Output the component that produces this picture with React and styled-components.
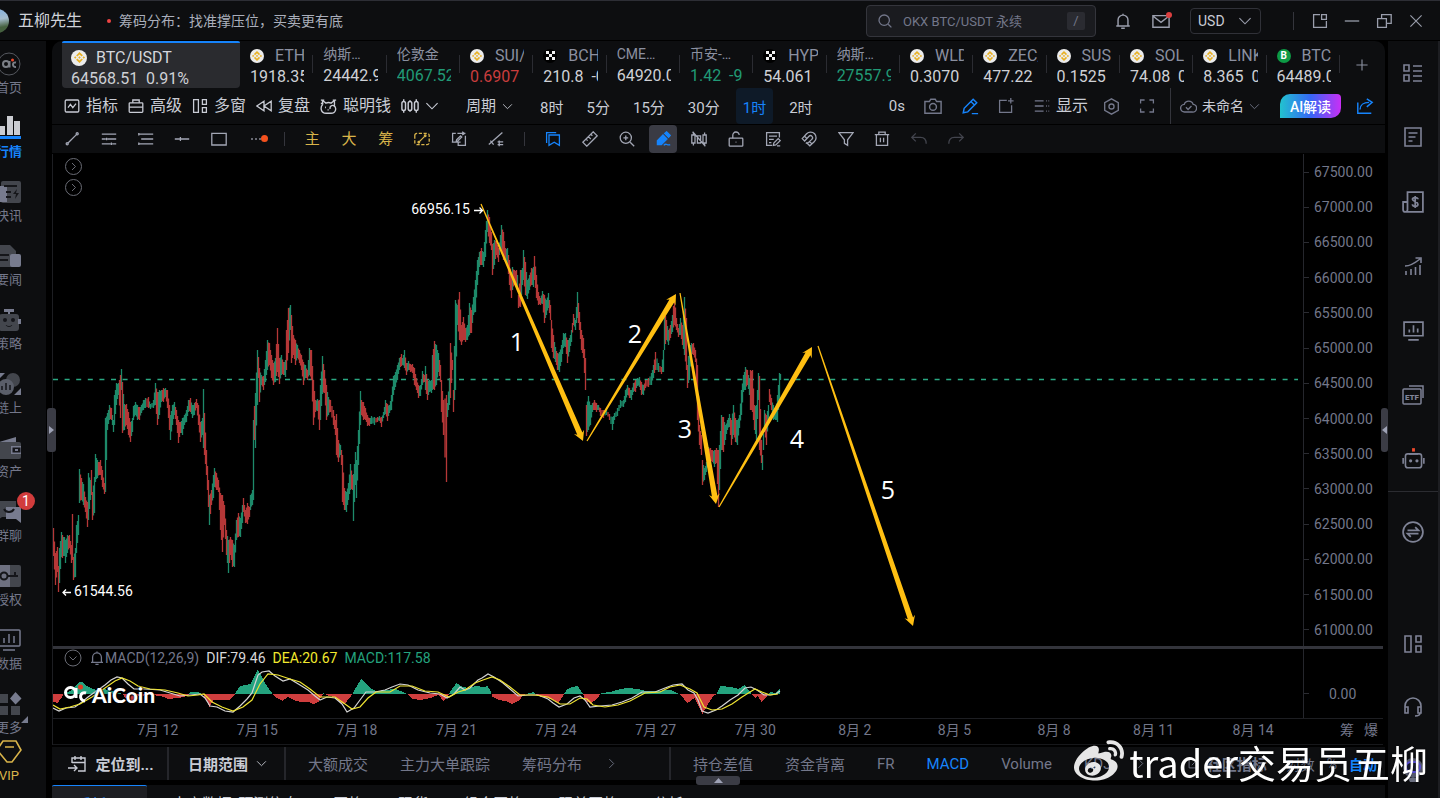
import React from 'react';
import styled, { createGlobalStyle, css } from 'styled-components';
import { FaWeibo } from 'react-icons/fa';
import { SiBinance } from 'react-icons/si';

const GlobalStyle = createGlobalStyle`
	* { box-sizing: border-box; }
	body {
		margin: 0;
		overflow: hidden;
		background: #000;
		color: #d5d7dd;
		font-family: Roboto, "Noto Sans CJK SC", sans-serif;
	}
	button, input, select { font: inherit; color: inherit; }
	button {
		padding: 0;
		border: 0;
		background: none;
		display: inline-flex;
		align-items: center;
		justify-content: center;
		white-space: nowrap;
		cursor: pointer;
	}
	a { color: inherit; text-decoration: none; }
	svg { display: block; flex: none; }
`;

const GREEN = '#219a76';
const RED = '#c93d3d';
const BLUE = '#1684fc';
const GOLD = '#d9b44a';
const MUTED = '#73778a';
const PANEL = '#0d0e10';

/* ---------- icons, drawn on a 20px grid ---------- */

const ICONS = {
	search: <><circle cx="9" cy="9" r="6.5" /><path d="M14 14l4 4" /></>,
	bell: <path d="M2.500 15.500h15M4.500 15.500V9a5.500 5.500 0 0 1 11 0v6.500M8 18h4M10 3.500V2" />,
	mail: <path d="M1 4h18v13H1zM1 4.500l9 7 9-7" />,
	down: <path d="M2 6l8 8 8-8" />,
	right: <path d="M6 2l8 8-8 8" />,
	plus: <path d="M10 2v16M2 10h16" />,
	minus: <path d="M1 10h18" />,
	close: <path d="M2 2l16 16M18 2L2 18" />,
	popout: <path d="M10 2H2v16h16v-8M12 2h6v6h-6z" />,
	restore: <path d="M2 7h11v11H2zM7 7V2h12v11h-6" />,
	trend: <><rect x="1.500" y="2.500" width="17" height="15" rx="1.500" /><path d="M5 12l3-4 3 4 4-5" /></>,
	briefcase: <><rect x="1.500" y="6" width="17" height="12" rx="1" /><path d="M6 6V2.500h8V6M1.500 11.500h17" /></>,
	windows: <path d="M2 2h6v16H2zM13 2h5v6h-5zM13 12h5v6h-5z" />,
	rewind: <path d="M10 4v12l-9-6zM19 4v12l-9-6z" />,
	smart: <><path d="M3 8V3l4 3c2-1 4-1 6 0l4-3v6M3 8c-3 3-2 10 4 10h6c6 0 7-7 3-9-2-1-5 1-4 4M1 2.500h4M1 6.500h3M15 2.500h4" /><path d="M6 11h1M9 14h1" strokeWidth="2" /></>,
	bars: <><rect x="1" y="5" width="4" height="10" rx="2" /><rect x="8" y="5" width="4" height="10" rx="2" /><rect x="15" y="5" width="4" height="10" rx="2" /><path d="M3 2.500V5M3 15v2.500M10 3.500V5M10 15v1.500M17 2.500V5M17 15v2.500" /></>,
	camera: <><path d="M1 5h5l1.500-2.500h5L14 5h5v13H1z" /><circle cx="10" cy="11" r="3.800" /></>,
	pen: <path d="M2.500 17.500l1-5L13.500 2.500l4 4-10 10-5 1zM11 5l4 4M12 18.500h7" />,
	pageplus: <path d="M11 3H2v15h15V9M16 0v7M12.500 3.500h7" />,
	lines: <path d="M1 3.500h11M1 10h11M1 16.500h11M15 3.500h1M18 3.500h1M15 10h1M18 10h1M15 16.500h1M18 16.500h1" />,
	hexagon: <><path d="M10 1l8 4.500v9L10 19l-8-4.500v-9z" /><circle cx="10" cy="10" r="3" /></>,
	full: <path d="M2 7V2.500h5M13 2.500h5V7M18 13v4.500h-5M7 17.500H2V13" />,
	cloud: <path d="M5.500 16.500a4.500 4.500 0 0 1-.5-9 5.500 5.500 0 0 1 10.500 0 4.500 4.500 0 0 1-1 9zM7 11l2.500 2.500 4-4" />,
	share: <path d="M2 6v12h15M4.500 14c0-5 4-8 10-8M12 2l6 4-6 5" />,
	segment: <><path d="M5 15L15.500 4.500" /><circle cx="4" cy="16" r="1.300" /><circle cx="16.500" cy="3.500" r="1.300" /></>,
	hlines: <path d="M1 4h18M1 10h5M8 10h11M1 16h11M14 16h5M7 8.500v3M13 14.500v3" />,
	levels: <path d="M1 4h18M4 10h15M1 16h18M1 2.500v3M1 14.500v3" />,
	midline: <path d="M1 10h18M8 7.500v5" />,
	rect: <path d="M1 3h18v14.500H1z" />,
	dots: <path d="M4 10h2M9 10h2M14 10h2" />,
	range: <><path d="M1 5.500A2.500 2.500 0 0 1 3.500 3h13A2.500 2.500 0 0 1 19 5.500v9a2.500 2.500 0 0 1-2.500 2.500h-13A2.500 2.500 0 0 1 1 14.500z" strokeDasharray="4 2" /><path d="M7 13l6-6" /><circle cx="6" cy="14" r="1" /><circle cx="14" cy="6" r="1" /></>,
	replace: <path d="M6 3H2v11h3M1 14h11M9 14v4h9V6M8 3h10M14 1l3 2-3 2M7 11l5-5 1.500 1.500-5 5-2 .5z" />,
	linecut: <path d="M1 17L18 2M3 12l4 5M12 13.500h7M12 17h7M14 12v7" />,
	bookmark: <path d="M5 5h13v13l-6.500-4L5 18zM2 15V2h12" />,
	ruler: <path d="M1 14L14 1l5 5L6 19zM11 4l2 2M8 7l3 3M5 10l2 2" />,
	zoom: <><circle cx="8.500" cy="8.500" r="7" /><path d="M14 14l5 5M8.500 5.500v6M5.500 8.500h6" /></>,
	marker: <><path d="M3 12L10 5l5 5-7 7H3zM12 3L14.500 1 19 5.500 17 8z" fill="currentColor" /><path d="M11 18c3-4 4 1 8-1" /></>,
	nobars: <path d="M1 5h4v10H1zM3 2v3M3 15v3M8 6h4v9H8zM15 5h4v10h-4zM17 2v3M17 15v3M2 1l16 18" />,
	lock: <><rect x="1.500" y="9" width="17" height="10" rx="1" /><path d="M6 9V5.500a4 4 0 0 1 8-.5M9.500 14h1" /></>,
	note: <path d="M18 8V2H2v16h7M5 6.500h10M5 10.500h6M5 14.500h3M10.500 18l.5-3 5.500-5.500 2.500 2.500-5.500 5.500zM15 18.500h4" />,
	magnet: <path d="M1.500 9.500l5.500-6a7 7 0 0 1 10 0 7 7 0 0 1-.5 10L11 18.500l-3-3 5.500-5a2.500 2.500 0 0 0-3.500-4l-5.500 6zM4.500 6.500l3 3M10.500 13l3 3M6 15.500l2-1.500" />,
	filter: <path d="M1 2h18l-7 9v7l-4-2.500V11z" />,
	trash: <path d="M1 4.500h18M6 4.500V1.500h8v3M3 4.500V18h14V4.500M8 8.500v5.500M12 8.500v5.500" />,
	undo: <path d="M6 3L1 8l5 5M1 8h11c5 0 7 3 7 8" />,
	redo: <path d="M14 3l5 5-5 5M19 8H8c-5 0-7 3-7 8" />,
	locate: <path d="M5 9V4h13v13h-7M5 8.500h13M8 2v4M14 2v4M1 14h9M7 11l3 3-3 3" />,
	edit: <path d="M10 2H2v16h16v-8M7 13l10-10" />,
	list: <path d="M1 2h5v6H1zM1 12h5v6H1zM10 3h9M10 8h9M10 13h9M10 18h9" />,
	doc: <path d="M2 1h16v18H2zM5.500 6h9M5.500 10h7M5.500 14h4" />,
	cash: <><path d="M5 1h14v18H3a2 2 0 0 1-2-2v-7h4zM5 10v7a2 2 0 0 1-2 2" /><path d="M14.500 7.500c0-2-5-2-5 0s5 2 5 4.500-5 2.500-5 0M12 4.500v11" /></>,
	growth: <path d="M2 10c5 0 10-3 15-7M12.500 2H18v5M3 19v-4M8 19v-6M12.500 19v-8M17 19V9" />,
	screen: <path d="M1 2h18v13H1zM5 19h10M6 12V9M10 12V5M14 12V8" />,
	robot: <><rect x="3" y="6" width="14" height="12" rx="2" /><path d="M1 9.500v5M19 9.500v5M6 6h8" /><circle cx="7.500" cy="12" r=".7" /><circle cx="13" cy="12" r=".7" /></>,
	swap: <><circle cx="10" cy="10" r="9" /><path d="M5 8.500h10l-3-3M15 11.500H5l3 3" /></>,
	headset: <path d="M2 13V9a8 8 0 0 1 16 0v4M2 10h3v6H2zM15 10h3v6h-3zM17 16c0 2-2 3-5 3" />,
};

const Icon = ({ name, size = 16, weight = 1.6, ...rest }) => (
	<svg width={size} height={size} viewBox="0 0 20 20" fill="none" stroke="currentColor" strokeWidth={weight} aria-hidden="true" {...rest}>
		{ICONS[name]}
	</svg>
);

/* ---------- title bar ---------- */

const Page = styled.div`
	display: flex;
	flex-direction: column;
	height: 100vh;
`;

const TopBar = styled.header`
	display: flex;
	align-items: center;
	flex: none;
	height: 41px;
	padding-right: 16px;
	overflow: hidden;
	background: ${PANEL};
	border-top: 1px solid #2d2e35;
	border-bottom: 1px solid #000;
	color: #9a9eac;
`;

const Avatar = styled.span`
	width: 24px;
	height: 24px;
	margin-left: -15px;
	border-radius: 50%;
	background: linear-gradient(170deg, #8fb4d8 20%, #a5bccd 45%, #45603f 75%);
`;

const UserName = styled.span`
	margin: 0 25px 0 9px;
	font-size: 16px;
	line-height: 20px;
	color: #d0d2d9;
`;

const Notice = styled.a`
	display: flex;
	align-items: center;
	gap: 8px;
	font-size: 14px;
	line-height: 18px;
	color: #aaaebb;

	&::before {
		content: "";
		width: 4px;
		height: 4px;
		border-radius: 50%;
		background: #ef4444;
	}
`;

const SearchBox = styled.label`
	display: flex;
	align-items: center;
	gap: 10px;
	width: 230px;
	height: 32px;
	margin: 0 17px 0 auto;
	padding: 0 10px;
	border: 1px solid #34353c;
	border-radius: 4px;
	background: #1a1b1f;
	color: ${MUTED};
`;

const SearchInput = styled.input`
	flex: 1;
	min-width: 0;
	padding: 2px 0 0;
	border: 0;
	outline: 0;
	background: none;
	font-size: 13px;

	&::placeholder { color: ${MUTED}; opacity: 1; }
`;

const Key = styled.kbd`
	width: 18px;
	border-radius: 2px;
	background: #2a2b31;
	font: 13px/18px Roboto, sans-serif;
	text-align: center;
`;

const TopButton = styled.button`
	position: relative;
	width: 20px;
	height: 24px;
	margin-right: ${p => p.$gap}px;
`;

const RedDot = styled.span`
	position: absolute;
	top: 3px;
	right: -1px;
	width: 6px;
	height: 6px;
	border-radius: 50%;
	background: #dc4040;
`;

const Currency = styled.label`
	display: flex;
	align-items: center;
	gap: 10px;
	height: 26px;
	margin-right: 32px;
	padding: 0 8px 0 7px;
	border: 1px solid #303138;
	border-radius: 4px;
	color: #9a9eac;
`;

const CurrencySelect = styled.select`
	width: 30px;
	padding: 0;
	border: 0;
	appearance: none;
	background: ${PANEL};
	font-size: 14px;
	color: #c9ccd5;
`;

const Rule = styled.span`
	flex: none;
	width: 1px;
	height: ${p => p.$h || 18}px;
	margin-right: ${p => p.$gap || 0}px;
	background: #34353c;
`;

/* ---------- side rails ---------- */

const Body = styled.div`
	display: flex;
	flex: 1;
	min-height: 0;
`;

const LeftRail = styled.nav`
	flex: none;
	width: 74px;
	margin-left: -28px;
	padding-top: 11px;
	background: ${PANEL};
`;

const RailItem = styled.a`
	position: relative;
	display: flex;
	flex-direction: column;
	align-items: center;
	gap: 4px;
	height: ${p => (p.$tight ? 48 : 64)}px;
	font-size: 13px;
	line-height: 16px;
	color: ${p => p.$color || MUTED};
	font-weight: ${p => (p.$bold ? 700 : 400)};
`;

const Badge = styled.span`
	position: absolute;
	top: -8px;
	left: 45px;
	width: 18px;
	border-radius: 9px;
	background: #d13c3c;
	color: #fff;
	font-size: 14px;
	line-height: 18px;
	text-align: center;
`;

const RightRail = styled.nav`
	display: flex;
	flex-direction: column;
	flex: none;
	width: 52px;
	margin-left: 3px;
	background: ${PANEL};
	border-right: 2px solid #1d1e22;
	color: #7f8396;
`;

const RailGroup = styled.div`
	display: flex;
	flex-direction: column;
	justify-content: space-around;
	align-items: center;
	height: 451px;
	border-bottom: 1px solid #2b2c31;

	button { height: 24px; }
`;

const RailFoot = styled.div`
	display: flex;
	flex-direction: column;
	flex: 1;
	align-items: center;
	gap: 39px;
	padding: 28px 0 16px;

	button { height: 24px; }
	button:nth-child(2) { margin-top: auto; }
`;

/* ---------- main column ---------- */

const Main = styled.main`
	display: flex;
	flex-direction: column;
	flex: 1;
	min-width: 0;
	margin-left: 6px;
`;

const Tickers = styled.div`
	display: flex;
	flex: none;
	height: 47px;
	padding-left: 10px;
	border-radius: 10px 10px 0 0;
	background: ${PANEL};
`;

const ActiveTicker = styled.a`
	flex: none;
	width: 178px;
	padding: 4px 9px 0;
	border-top: 2px solid ${BLUE};
	border-radius: 2px 2px 4px 4px;
	background: #2a2b2f;
	font-size: 16px;
	line-height: 22px;
	color: #d5d7dd;
	white-space: pre;
`;

const TickerLink = styled.a`
	flex: 1;
	min-width: 0;
	padding: ${p => (p.$plain ? 1 : 4)}px 9px 0 10px;
	background: linear-gradient(#2b2c32, #2b2c32) right 14px / 1px 18px no-repeat;
	font-size: 16px;
	line-height: 22px;
	white-space: pre;
`;

const TickerName = styled.span`
	display: flex;
	align-items: center;
	gap: ${p => (p.$on ? 9 : 11)}px;
	height: ${p => (p.$plain ? 23 : 21)}px;
	overflow: hidden;
	font-size: ${p => (p.$plain ? 14 : 16)}px;
	color: ${p => (p.$on ? '#d5d7dd' : '#8b90a0')};
`;

const TickerPrice = styled.span`
	display: block;
	overflow: hidden;
	color: ${p => p.$color || '#cfd1d6'};
`;

const Coin = styled.span`
	display: flex;
	align-items: center;
	justify-content: center;
	flex: none;
	width: ${p => p.$size || 14}px;
	height: ${p => p.$size || 14}px;
	border-radius: 50%;
	background: ${p => p.$bg || '#ececec'};
	color: ${p => p.$fg || '#e8b024'};
	font-size: 10px;
	font-weight: 700;
`;

const AddTicker = styled.button`
	width: 45px;
	color: #8b90a0;
`;

const Bar = styled.div`
	display: flex;
	align-items: center;
	flex: none;
	height: ${p => p.$h}px;
	margin-bottom: ${p => p.$mb || 0}px;
	background: ${PANEL};
	overflow: hidden;
`;

const Tools = styled.div`
	display: flex;
	align-items: center;
	gap: 10px;
	padding-left: 12px;
`;

const Tool = styled.button`
	gap: ${p => p.$gap || 6}px;
	margin-right: ${p => p.$mr || 0}px;
	font-size: ${p => p.$size || 16}px;
	line-height: 20px;
	color: ${p => p.$color || '#c9ccd5'};
`;

const Periods = styled(Tools)`
	gap: 9px;
	padding-left: 27px;
`;

const Period = styled.button`
	height: 36px;
	padding: 0 7px;
	border-radius: 4px;
	font-size: 15px;
	color: ${p => (p.$on ? BLUE : '#c9ccd5')};
	background: ${p => (p.$on ? '#0e1a28' : 'none')};
`;

const RightTools = styled.div`
	display: flex;
	align-items: center;
	margin-left: auto;
	padding-right: 11px;
`;

const AiButton = styled.button`
	width: 61px;
	height: 24px;
	margin-right: 15px;
	border-radius: 10px 4px 10px 0;
	background: linear-gradient(90deg, #22c3cf, #3566f5 50%, #c92ff5);
	font-size: 14px;
	font-weight: 500;
	color: #fff;
`;

const DrawGroup = styled.div`
	display: flex;
	flex: 0 0 ${p => p.$w}px;
	padding-left: ${p => p.$pad || 0}px;
`;

const DrawButton = styled.button`
	position: relative;
	flex: 1;
	height: 28px;
	font-size: 15px;
	line-height: 20px;
	color: ${p => p.$color || '#a3a7b5'};

	${p => p.$on && css`
		flex: 0 0 28px;
		margin: 0 4px;
		border-radius: 4px;
		background: #3a3b44;
	`}
`;

const DrawSlot = styled.span`
	display: flex;
	flex: 1;
	align-items: center;
	justify-content: center;
`;

const OrangeDot = styled(RedDot)`
	top: 10px;
	right: 6px;
	width: 7px;
	height: 7px;
	background: #f4511e;
`;

/* ---------- chart ---------- */

const ChartArea = styled.section`
	position: relative;
	display: flex;
	flex-direction: column;
	flex: 1;
	min-height: 0;
	margin-bottom: 2px;
	padding-right: 2px;
	border-left: 1px solid #1d1e22;
	background: #000;
`;

const Pane = styled.div`
	display: flex;
	flex: ${p => (p.$h ? `0 0 ${p.$h}px` : '1')};
	min-height: 0;
`;

const Canvas = styled.svg`
	flex: 1 1 0;
	min-width: 0;
	height: 100%;
	overflow: hidden;
`;

const Axis = styled.ul`
	display: flex;
	flex-direction: column;
	justify-content: ${p => (p.$center ? 'center' : 'space-between')};
	flex: 0 0 80px;
	margin: 0;
	padding: ${p => (p.$center ? '20px 0 0' : '10px 0 8px')};
	border-left: 1px solid #25262c;
	list-style: none;
	font-size: 14px;
	line-height: 16px;
	color: ${MUTED};
`;

const AxisLabel = styled.li`
	display: flex;
	align-items: center;
	gap: ${p => (p.$short ? 20 : 5)}px;

	&::before {
		content: "";
		width: 5px;
		height: 1px;
		background: #2b2c32;
	}
`;

const Splitter = styled.hr`
	flex: none;
	width: 100%;
	height: 3px;
	margin: 0;
	border: 0;
	background: #33343b;
`;

const Legend = styled.div`
	position: absolute;
	left: 11px;
	bottom: 77px;
	display: flex;
	align-items: center;
	gap: 7px;
	height: 20px;
	font-size: 14px;
	line-height: 18px;
	color: ${MUTED};
`;

const LegendName = styled.span`
	display: flex;
	align-items: center;
`;

const LegendValue = styled.span`
	color: ${p => p.$color};
`;

const Brand = styled.div`
	position: absolute;
	left: 10px;
	bottom: 39px;
	display: flex;
	align-items: center;
	gap: 5px;
	height: 24px;
	color: #fff;
	font: 900 21px Lato, sans-serif;
	text-shadow: 0 0 2px #000, 1px 1px 1px #000;
`;

const TimeAxis = styled.div`
	display: flex;
	flex: 0 0 27px;
	padding-left: 55px;
	border-top: 1px solid #1d1e22;
	border-bottom: 1px solid #17181b;
	font-size: 14px;
	line-height: 22px;
	color: ${MUTED};
`;

const TimeLabel = styled.span`
	flex: 1;
	text-align: center;
	white-space: nowrap;
`;

const AxisTools = styled.span`
	display: flex;
	justify-content: flex-end;
	align-items: flex-start;
	gap: 10px;
	flex: 0 0 80px;
	padding-right: 5px;
`;

const Handle = styled.button`
	position: absolute;
	z-index: 2;
	top: 254px;
	${p => (p.$side === 'left' ? 'left: -6px' : 'right: -3px')};
	width: ${p => (p.$side === 'left' ? 9 : 7)}px;
	height: 44px;
	border-radius: 3px;
	background: #3b3c45;
	color: #9ea2b5;
`;

const BottomHandle = styled(Handle)`
	top: auto;
	right: auto;
	left: 643px;
	bottom: -40px;
	width: 44px;
	height: 9px;
`;

/* ---------- bottom ---------- */

const FootCell = styled.button`
	flex: 0 0 117px;
	height: 100%;
	gap: 8px;
	padding-left: 2px;
	border-right: 2px solid #25262b;
	font-size: 15px;
	font-weight: 700;
	color: #c9ccd5;
`;

const FootNav = styled.nav`
	display: flex;
	align-items: center;
	flex: ${p => (p.$w ? `0 0 ${p.$w}px` : '1')};
	gap: 32px;
	min-width: 0;
	height: 100%;
	padding-left: 22px;
	padding-right: 8px;
	border-right: ${p => (p.$w ? '2px solid #25262b' : '0')};
	white-space: nowrap;
	color: ${MUTED};

	> svg { margin-left: -8px; }
`;

const FootLink = styled.a`
	display: flex;
	align-items: center;
	gap: 8px;
	font-size: ${p => (p.$small ? 14 : 15)}px;
	font-weight: ${p => (p.$bold ? 700 : 400)};
	color: ${p => (p.$on ? BLUE : 'inherit')};
`;

const FootOptions = styled.div`
	display: flex;
	align-items: center;
	gap: 12px;
	margin-left: auto;

	a:first-child { margin-right: 8px; }
`;

const LowerTabs = styled.nav`
	display: flex;
	flex: 0 0 13px;
	gap: 35px;
	margin-top: 5px;
	overflow: hidden;
	background: ${PANEL};
	font-size: 15px;
	line-height: 18px;
	color: #c9ccd5;
	white-space: nowrap;
`;

const LowerTab = styled.a`
	height: 36px;
	padding-top: 10px;

	${p => p.$on && css`
		width: 95px;
		margin-right: -10px;
		border-top: 1px solid ${BLUE};
		border-radius: 2px 2px 0 0;
		background: #1d1e22;
		color: ${BLUE};
		text-align: center;
	`}
`;

const Signature = styled.div`
	position: fixed;
	right: 12px;
	bottom: 11px;
	z-index: 5;
	display: flex;
	align-items: center;
	gap: 5px;
	color: #fff;
	font: 38px/50px "Noto Sans CJK SC", sans-serif;
	text-shadow: 0 0 2px rgba(0, 0, 0, 0.6);
	pointer-events: none;

	svg { color: #e6e6e6; }
`;

/* ---------- data ---------- */

const TICKERS = [
	['bnb', 'ETH/', '1918.35'],
	[null, '纳斯…', '24442.9'],
	[null, '伦敦金', '4067.52', GREEN],
	['bnb', 'SUI/U', '0.6907', RED],
	['okx', 'BCH/', '210.8  -0'],
	[null, 'CME…', '64920.0'],
	[null, '币安-…', '1.42  -9', GREEN],
	['okx', 'HYPE', '54.061'],
	[null, '纳斯…', '27557.9', GREEN],
	['bnb', 'WLD', '0.3070'],
	['bnb', 'ZEC/', '477.22'],
	['bnb', 'SUSH', '0.1525'],
	['bnb', 'SOL/', '74.08  0'],
	['bnb', 'LINK', '8.365  0'],
	['bch', 'BTC/', '64489.0'],
];

const PRICES = ['67500.00', '67000.00', '66500.00', '66000.00', '65500.00', '65000.00', '64500.00', '64000.00', '63500.00', '63000.00', '62500.00', '62000.00', '61500.00', '61000.00'];
const DATES = ['7月 12', '7月 15', '7月 18', '7月 21', '7月 24', '7月 27', '7月 30', '8月 2', '8月 5', '8月 8', '8月 11', '8月 14'];

// x high low, with a trailing r for a falling bar
const CANDLES = `53 528 556r,55 553 585r,57 547 572r,58 566 592r,59 548 583,61 532 557,62 535 558r,64 537 556,65 540 563,67 535 553,69 535 548r,71 545 563r,72 514 560r,73 557 580r,75 548 577,76 525 553,78 515 535,79 469 503,81 478 500r,83 484 505,85 497 512r,87 502 527r,88 473 520,90 480 500,91 470 495r,92 492 520r,94 477 513,95 454 482,97 460 478,99 462 475r,100 460 475r,102 470 487r,104 483 494r,105 418 492,107 413 430,109 405 420,111 408 420r,113 420 432,114 395 425,116 383 405,118 383 395,120 375 418r,121 369 390,122 382 433r,124 404 430,126 404 425r,128 412 435r,130 422 442r,132 418 432,133 406 420,135 402 415,137 405 420,139 407 420r,141 405 413,143 400 410,145 398 408,148 397 408r,150 404 409,153 400 408,155 383 405,157 392 425r,159 390 415,161 390 402,163 388 402r,165 388 397,167 390 408r,169 405 430r,170 415 440,172 405 425,174 402 415,176 410 425r,178 420 443r,180 422 433r,182 418 435,184 415 425,186 410 422,188 400 412,190 398 412r,192 405 418,194 403 415,196 399 408r,198 405 425r,200 422 442r,202 418 435,203 389 448,204 413 455r,206 450 475r,208 480 507r,209 495 525,211 490 505r,213 475 498,214 468 487,216 473 490r,218 480 492r,220 493 530r,222 495 552r,224 505 525r,226 530 555r,228 540 573,230 537 555r,232 540 567r,234 545 567,236 520 540,238 513 537r,240 518 537,242 505 523,243 498 512r,245 510 523r,247 503 524r,249 507 517r,250 495 510,252 490 505,253 420 500,254 406 440r,255 393 448,257 350 405,258 357 378r,259 368 402r,261 375 385,263 376 390r,265 360 382,267 340 370,269 343 365r,271 355 378r,273 363 385r,275 358 382,277 328 372r,279 358 384r,281 355 375,283 362 375r,285 360 377,286 330 370r,288 308 353r,290 305 330,291 315 363r,293 335 355r,295 340 365r,297 345 358,299 350 363r,301 355 370r,303 362 385r,305 365 378,307 370 380r,309 348 375,311 350 380r,313 380 425r,315 400 412r,317 399 411,319 400 430r,320 385 420,322 356 394,324 370 393r,326 385 420r,328 397 415,330 400 412r,333 410 425r,335 420 435r,336 414 455r,338 440 462r,340 445 455,341 450 465r,342 455 502r,344 488 510r,346 492 512,348 483 500,350 464 490,352 475 490r,353 474 521,355 452 485,356 460 498,358 430 465,360 391 425,361 400 415r,363 402 420r,365 408 420r,367 415 426r,369 418 426r,371 416 424,374 417 425,377 417 422r,379 416 421,381 417 427r,383 412 418,385 400 414,387 404 421r,389 405 413,391 395 410,393 376 395,395 372 387,397 365 380,399 358 370,401 354 366r,402 358 365,404 350 368,406 363 375r,408 361 370,410 364 372r,412 364 373r,414 368 385r,416 378 390r,418 385 398r,420 385 396,422 371 385,424 375 382r,425 366 390,427 380 400r,429 380 392,431 380 393,432 355 390,434 341 390r,436 345 385,438 353 372,440 365 382r,441 380 412r,443 400 435r,446 395 482r,447 403 417,449 378 405,450 343 398r,452 360 370r,453 390 412r,455 300 390,457 305 325,459 292 340r,461 325 345r,463 317 340r,465 328 342r,467 325 340,469 303 335,471 310 333r,473 297 315,475 280 312,477 260 285,479 252 267,481 248 265r,483 252 267,485 230 257,487 210 232,489 217 243r,491 232 250r,492 244 275r,494 240 265,496 240 255r,498 248 262r,500 235 250,501 225 250,503 232 260r,505 248 262r,507 248 265,509 260 285r,511 275 298r,512 267 290,514 270 285r,516 270 285r,517 275 290,518 295 308r,520 270 307r,522 268 285,523 250 280,525 262 295r,527 280 299,529 275 290,531 268 285r,533 267 287,534 256 280r,536 275 298r,538 292 305r,540 298 305r,542 291 304,544 295 323r,546 300 315,548 293 308,550 305 320r,551 320 348r,553 335 358r,555 347 362,557 353 370r,559 352 372,561 345 362,563 333 348,565 333 347,567 340 363r,569 338 352,571 330 342,573 314 325r,575 320 330,577 292 318,579 312 330r,581 330 350r,583 338 358r,585 358 390r,586 405 436r,588 396 430,590 405 425,592 403 412,594 400 410r,596 403 412r,598 405 410,600 408 416r,603 410 418r,606 408 415,609 414 420r,612 417 430,614 413 420,617 408 416,620 400 408,623 400 407,625 390 402,627 385 395,629 388 398r,631 390 400,633 383 392,635 380 392r,637 378 386,639 377 387,641 382 395r,643 385 395,645 380 388r,648 378 387r,651 373 385,653 365 378,655 352 370r,658 363 372,661 367 374r,663 350 372,664 310 350,666 320 340r,668 330 345,670 325 338r,672 315 332,674 295 325r,676 318 330r,678 328 337r,680 318 335,682 325 345r,684 297 355,686 318 370r,687 365 388r,689 345 380,691 343 355,693 343 355r,695 350 362r,697 365 420r,699 425 445r,701 435 455r,702 460 485r,704 468 480,706 462 472,708 447 465,710 448 462r,712 450 462r,714 450 467,716 448 463r,718 450 507r,719 445 490,721 415 450,723 417 452r,725 425 440,727 420 430,729 414 427,731 420 445r,733 405 435,735 418 442r,737 420 445,739 415 428,741 390 415,743 375 392,745 367 390,747 370 385r,749 378 395,750 370 410r,752 370 412r,754 405 430r,756 405 440,758 373 400,759 376 450r,761 440 463r,762 455 470,764 410 432,766 415 445r,768 405 420,769 389 402r,771 398 410r,773 405 420,775 410 420,777 395 422,779 373 400,780 374 380`
	.split(',')
	.map(s => {
		const [x, hi, lo] = s.replace('r', '').split(' ').map(Number);
		return { x, hi, lo, down: s.endsWith('r') };
	});

const HISTOGRAM = '53,-8 57,-9 61,-4 63,0 70,3 75,8 79,12 82,12 86,8 90,6 96,4 100,5 110,4 118,1 122,0 125,-4 132,-7 138,-2 150,-1 160,-2 168,-5 178,-4 187,-2 190,2 197,2 202,0 206,-6 209,-13 213,-6 219,-6 225,-6 229,-6 234,-1 236,3 240,8 245,9 250,10 254,18 257,24 260,20 265,10 270,3 272,0 275,-3 282,-7 287,-3 293,-6 300,-8 308,-8 313,-10 318,-8 323,1 328,-2 334,-3 340,-9 344,-10 350,-3 353,2 357,9 361,15 366,10 371,5 376,3 385,4 395,5 400,3 407,0 412,-5 420,-6 430,-4 438,-1 443,-7 447,-3 450,3 456,11 462,7 468,6 475,8 484,7 487,8 490,3 492,-3 498,-6 505,-7 511,-10 518,-7 523,-1 533,2 537,-2 545,-4 552,-5 558,-9 562,-3 566,4 572,7 577,8 582,1 585,-6 590,-10 596,-5 601,1 610,2 620,5 628,6 637,5 645,3 655,3 670,4 675,2 680,-1 687,-9 694,-4 698,-12 702,-20 707,-11 712,-3 716,0 720,8 730,7 738,5 744,9 748,4 752,-1 755,-4 757,-2 761,-8 765,-4 768,0 770,2 775,1 780,6'
	.split(' ')
	.map(s => s.split(',').map(Number));

const DIF = '53,708 59,711 66,708 75,707 82,702 88,697 95,692 105,685 111,680 117,677 122,678 128,684 134,689 145,689 160,690 170,693 180,696 190,695 200,694 205,698 210,706 217,707 225,711 233,712 240,706 247,699 252,693 258,675 262,672 269,671 275,676 283,681 290,679 300,685 308,690 315,696 320,700 327,697 335,698 342,704 347,712 354,708 360,700 366,692 375,692 385,690 392,687 400,684 408,685 418,690 430,693 440,694 447,698 454,694 460,687 465,690 470,688 478,680 482,678 488,674 494,677 503,683 510,689 518,696 528,695 538,695 548,699 553,703 559,707 567,704 574,698 580,696 585,700 590,707 600,706 612,705 622,702 632,698 642,692 655,692 665,688 673,685 682,684 688,690 694,693 698,700 702,711 708,713 716,710 722,706 730,700 738,695 745,688 751,687 757,690 764,695 770,695 776,694 780,691';
const DEA = '53,705 60,709 70,707 80,704 92,697 105,688 115,681 122,678 130,681 138,686 150,689 165,690 178,693 188,696 198,695 204,694 212,702 222,707 233,711 243,707 252,700 260,684 268,674 278,675 290,679 300,682 310,689 320,697 335,697 345,704 352,709 360,707 368,698 376,692 390,692 400,686 412,686 425,691 438,692 449,697 458,692 465,690 475,683 483,680 492,677 500,680 510,687 520,695 535,695 548,697 560,704 570,704 580,698 587,699 593,705 605,707 618,705 630,701 645,693 660,692 670,687 680,685 690,689 697,693 704,707 712,710 722,709 732,704 742,697 750,692 755,689 762,692 770,695 778,694';

const WAVES = [
	{ n: 1, from: [481, 204], to: [583, 441], label: [517, 351] },
	{ n: 2, from: [587, 441], to: [676, 294], label: [635, 343] },
	{ n: 3, from: [680, 293], to: [716, 504], label: [685, 438] },
	{ n: 4, from: [719, 507], to: [812, 347], label: [797, 448] },
	{ n: 5, from: [818, 346], to: [913, 626], label: [888, 499] },
];

// fill the wider gaps so the bars stand next to each other
const bars = CANDLES.flatMap((c, i) => {
	const next = CANDLES[i + 1];
	if (!next || next.x - c.x < 2) return [c];
	return [c, {
		x: (c.x + next.x) / 2,
		hi: (c.hi + next.hi) / 2 + 1,
		lo: (c.lo + next.lo) / 2 - 1,
		down: next.down,
	}];
});

const candlePath = down => bars.filter(b => b.down === down).map(b => `M${b.x + 0.5} ${b.hi}V${b.lo}`).join('');

const histogramPath = up => {
	let d = '';
	for (let i = 0; i < HISTOGRAM.length - 1; i++) {
		const [x1, v1] = HISTOGRAM[i];
		const [x2, v2] = HISTOGRAM[i + 1];
		for (let x = x1; x < x2; x++) {
			const v = Math.round(v1 + ((v2 - v1) * (x - x1)) / (x2 - x1));
			if (v !== 0 && v > 0 === up) d += `M${x} 694h1v${-v}h-1z`;
		}
	}
	return d;
};

const arrowPoints = ([x1, y1], [x2, y2]) => {
	const len = Math.hypot(x2 - x1, y2 - y1);
	const ux = (x2 - x1) / len;
	const uy = (y2 - y1) / len;
	const at = (along, side) => `${x1 + ux * along - uy * side},${y1 + uy * along + ux * side}`;
	return [at(0, 0.6), at(len - 8, 2.8), at(len - 10, 5.5), at(len, 0), at(len - 10, -5.5), at(len - 8, -2.8), at(0, -0.6)].join(' ');
};

/* ---------- parts ---------- */

const CoinMark = ({ kind, size }) => {
	if (kind === 'okx') {
		return (
			<Coin $bg="#000">
				<svg width="9" height="9" fill="#f2f2f2"><path d="M0 0h3v3H0zM6 0h3v3H6zM3 3h3v3H3zM0 6h3v3H0zM6 6h3v3H6z" /></svg>
			</Coin>
		);
	}
	if (kind === 'bch') return <Coin $bg="#0d9a45" $fg="#fff">B</Coin>;
	return <Coin $size={size}><SiBinance size={size ? 11 : 10} /></Coin>;
};

const RailArt = ({ kind }) => {
	const a = '#43464d';
	const b = '#777b8e';
	const art = {
		home: <><circle cx="12" cy="12" r="11" fill="none" stroke="#55585f" /><circle cx="9" cy="12" r="3" fill="none" stroke="#7b7f86" strokeWidth="2" /><path d="M12.500 9v6.500M19 10.500c-4-1-4 5 0 4.500" fill="none" stroke="#7b7f86" strokeWidth="2" /><circle cx="15.500" cy="8" r="1.500" fill="#ee4a2c" /></>,
		market: <><path d="M3 10h5v9H3zM10 0h6v19h-6zM17 5h6v14h-6z" fill="#cbcdd2" /><path d="M0 20h24v3H0z" fill={BLUE} /></>,
		flash: <><rect x="4" y="1" width="20" height="22" rx="2" fill={a} /><path d="M0 6h10v16H0z" fill={b} /><path d="M7 6h13M9 12h5M9 17h5" stroke="#15161a" strokeWidth="1.800" /><path d="M20 9l-4 5h3l-1 5 4-6h-3z" fill="#15161a" /></>,
		news: <><path d="M0 1h13l6 6v16H0z" fill={a} /><rect x="13" y="10" width="11" height="13" rx="2" fill={b} /><path d="M2 11h10M2 16h9" stroke="#15161a" strokeWidth="1.800" /></>,
		robot: <><path d="M7 1h10v3h-4v3h-2V4H7z" fill={b} /><rect x="2" y="6" width="20" height="17" rx="3" fill={a} /><path d="M0 11h3v5H0zM21 11h3v5h-3z" fill={b} /><circle cx="8" cy="12" r="2" fill="#15161a" /><circle cx="16" cy="12" r="2" fill="#15161a" /><path d="M9 17c1 2 5 2 6 0" stroke="#15161a" fill="none" /></>,
		chain: <><circle cx="16" cy="8" r="7" fill={a} /><circle cx="9" cy="15" r="8" fill="#5a5e69" /><path d="M5 14v4M9 11v7M13 13v5" stroke="#15161a" strokeWidth="1.500" /><path d="M1 1h7L1 8zM24 16v7h-7z" fill={b} /></>,
		wallet: <><path d="M2 6l17-5v5z" fill={b} /><rect x="0" y="6" width="24" height="17" rx="2" fill={a} /><path d="M14 10h10v8H14z" fill={b} /><path d="M15.500 11.500h8v5h-8z" fill="#15161a" /><path d="M18 13h3v2h-3z" fill={b} /></>,
		chat: <><path d="M0 1h19v16H5l-5 4z" fill={a} /><path d="M9 7h15v16l-5-4H9z" fill={b} /><path d="M7 9c2 4 8 4 10 0" stroke="#15161a" strokeWidth="2" fill="none" /></>,
		key: <><rect x="0" y="1" width="24" height="22" rx="2" fill={a} /><path d="M0 1h13v22H0z" fill="#6d7080" /><circle cx="7" cy="12" r="3.500" fill="none" stroke="#15161a" strokeWidth="2" /><path d="M10.500 12H21M18 12V8" stroke="#15161a" strokeWidth="2" /></>,
		data: <><rect x="1" y="2" width="22" height="16" rx="1" fill="none" stroke={b} strokeWidth="1.500" /><path d="M7 10v5M12 6v9M17 8v7M6 22h12" stroke={b} strokeWidth="1.500" /></>,
		more: <><path d="M1 2h10v9H1zM1 14h10v9H1zM14 14h9v9h-9z" fill={a} /><path d="M18.500 0l6 6.500-6 6L13 6.500zM31 24v7h-7z" fill={b} /></>,
		vip: <path d="M6 1h13l5 9-9 12h-5L0 10zM8 7h9" fill="none" stroke={GOLD} strokeWidth="1.600" />,
	};
	return <svg width="24" height="24" viewBox="0 0 24 24" overflow="visible" aria-hidden="true">{art[kind]}</svg>;
};

const RAIL = [
	['home', '首页'], ['market', '行情'], ['flash', '快讯'], ['news', '要闻'], ['robot', '策略'], ['chain', '链上'],
	['wallet', '资产'], ['chat', '群聊'], ['key', '授权'], ['data', '数据'], ['more', '更多'],
];

const Header = () => (
	<TopBar>
		<Avatar />
		<UserName>五柳先生</UserName>
		<Notice href="#notice">筹码分布：找准撑压位，买卖更有底</Notice>
		<SearchBox>
			<Icon name="search" />
			<SearchInput type="text" placeholder="OKX BTC/USDT 永续" aria-label="搜索" />
			<Key>/</Key>
		</SearchBox>
		<TopButton aria-label="通知" $gap={18}><Icon name="bell" size={18} /></TopButton>
		<TopButton aria-label="消息" $gap={19}><Icon name="mail" size={18} /><RedDot /></TopButton>
		<Currency>
			<CurrencySelect aria-label="货币" defaultValue="USD"><option>USD</option><option>CNY</option></CurrencySelect>
			<Icon name="down" size={14} />
		</Currency>
		<Rule $gap={16} />
		<TopButton aria-label="弹出" $gap={12}><Icon name="popout" /></TopButton>
		<TopButton aria-label="最小化" $gap={12}><Icon name="minus" /></TopButton>
		<TopButton aria-label="还原" $gap={12}><Icon name="restore" /></TopButton>
		<TopButton aria-label="关闭" $gap={-2}><Icon name="close" size={14} /></TopButton>
	</TopBar>
);

const TickerRow = () => (
	<Tickers>
		<ActiveTicker href="#btc">
			<TickerName $on><CoinMark kind="bnb" size={16} />BTC/USDT</TickerName>
			<TickerPrice>64568.51  0.91%</TickerPrice>
		</ActiveTicker>
		{TICKERS.map(([kind, name, price, color], i) => (
			<TickerLink key={i} href="#ticker" $plain={!kind}>
				<TickerName $plain={!kind}>{kind && <CoinMark kind={kind} />}{name}</TickerName>
				<TickerPrice $color={color}>{price}</TickerPrice>
			</TickerLink>
		))}
		<AddTicker aria-label="添加"><Icon name="plus" size={14} /></AddTicker>
	</Tickers>
);

const Toolbar = () => (
	<Bar $h={36} $mb={1}>
		<Tools>
			<Tool><Icon name="trend" />指标</Tool>
			<Tool><Icon name="briefcase" />高级</Tool>
			<Tool><Icon name="windows" />多窗</Tool>
			<Tool><Icon name="rewind" />复盘</Tool>
			<Tool><Icon name="smart" size={17} />聪明钱</Tool>
			<Tool aria-label="图表类型"><Icon name="bars" size={18} /><Icon name="down" size={14} /></Tool>
		</Tools>
		<Periods>
			<Tool $size={15} $mr={11}>周期<Icon name="down" size={11} /></Tool>
			{['8时', '5分', '15分', '30分', '1时', '2时'].map(p => <Period key={p} $on={p === '1时'}>{p}</Period>)}
		</Periods>
		<RightTools>
			<Tool $size={15} $mr={19}>0s</Tool>
			<Tool aria-label="截图" $mr={19} $color={MUTED}><Icon name="camera" size={18} /></Tool>
			<Tool aria-label="画线" $mr={19} $color={BLUE}><Icon name="pen" size={18} /></Tool>
			<Tool aria-label="新建" $mr={20} $color={MUTED}><Icon name="pageplus" /></Tool>
			<Tool $mr={15}><Icon name="lines" color={MUTED} />显示</Tool>
			<Tool aria-label="设置" $mr={19} $color={MUTED}><Icon name="hexagon" size={17} /></Tool>
			<Tool aria-label="全屏" $mr={15} $color={MUTED}><Icon name="full" /></Tool>
			<Rule $h={36} $gap={9} />
			<Tool $size={14} $gap={5} $mr={20}><Icon name="cloud" size={17} color={MUTED} />未命名<Icon name="down" size={11} color={MUTED} /></Tool>
			<AiButton>AI解读</AiButton>
			<Tool aria-label="分享" $color={BLUE}><Icon name="share" size={18} /></Tool>
		</RightTools>
	</Bar>
);

const DrawBar = () => (
	<Bar $h={28} $mb={1}>
		<DrawGroup $w={222} $pad={2}>
			{['segment', 'hlines', 'levels', 'midline', 'rect', 'dots'].map(n => (
				<DrawButton key={n} aria-label={n}><Icon name={n} />{n === 'dots' && <OrangeDot />}</DrawButton>
			))}
		</DrawGroup>
		<DrawGroup $w={20}><DrawSlot><Rule $h={14} /></DrawSlot></DrawGroup>
		<DrawGroup $w={220}>
			{['主', '大', '筹'].map(t => <DrawButton key={t} $color={GOLD}>{t}</DrawButton>)}
			<DrawButton aria-label="range" $color={GOLD}><Icon name="range" /></DrawButton>
			<DrawButton aria-label="replace"><Icon name="replace" /></DrawButton>
			<DrawButton aria-label="cut"><Icon name="linecut" /></DrawButton>
		</DrawGroup>
		<DrawGroup $w={21}><DrawSlot><Rule $h={14} /></DrawSlot></DrawGroup>
		<DrawGroup $w={439}>
			<DrawButton aria-label="bookmark" $color={BLUE}><Icon name="bookmark" /></DrawButton>
			<DrawButton aria-label="ruler"><Icon name="ruler" /></DrawButton>
			<DrawButton aria-label="zoom"><Icon name="zoom" /></DrawButton>
			<DrawButton aria-label="marker" $on $color={BLUE}><Icon name="marker" /></DrawButton>
			{['nobars', 'lock', 'note', 'magnet', 'filter', 'trash'].map(n => <DrawButton key={n} aria-label={n}><Icon name={n} /></DrawButton>)}
			<DrawButton aria-label="undo" $color="#43454e"><Icon name="undo" /></DrawButton>
			<DrawButton aria-label="redo" $color="#43454e"><Icon name="redo" /></DrawButton>
		</DrawGroup>
	</Bar>
);

const Chart = () => (
	<ChartArea>
		<Pane>
			<Canvas>
				<g transform="translate(-53 -154)">
					{[166, 187].map(y => (
						<g key={y} fill="none" stroke="#6a6c75" strokeWidth="1">
							<circle cx="73.500" cy={y + 0.5} r="8" />
							<path d={`M72 ${y - 3}l3.500 3.500-3.500 3.500`} />
						</g>
					))}
					<path d="M53 379.500H1298" stroke="#2aa882" strokeWidth="1.300" strokeDasharray="5 6.600" />
					<path d={candlePath(false)} stroke={GREEN} strokeWidth="1.300" opacity=".9" />
					<path d={candlePath(true)} stroke={RED} strokeWidth="1.300" opacity=".9" />
					{WAVES.map(w => (
						<g key={w.n}>
							<polygon points={arrowPoints(w.from, w.to)} fill="#ffbf12" />
							<text x={w.label[0]} y={w.label[1]} fill="#fff" fontFamily="Open Sans" fontSize="25" textAnchor="middle">{w.n}</text>
						</g>
					))}
					<g fill="#fff" fontSize="14">
						<text x="470" y="214" textAnchor="end">66956.15</text>
						<text x="74" y="596">61544.56</text>
					</g>
					<path d="M474 210.500h8M479.500 207.500l3 3-3 3M71 592.500h-8M66 589.500l-3 3 3 3" stroke="#fff" strokeWidth="1.300" fill="none" />
				</g>
			</Canvas>
			<Axis>{PRICES.map(p => <AxisLabel key={p}>{p}</AxisLabel>)}</Axis>
		</Pane>
		<Splitter />
		<Pane $h={69}>
			<Canvas>
				<g transform="translate(-53 -649)">
					<path d={histogramPath(true)} fill="#24a37e" />
					<path d={histogramPath(false)} fill="#cf3e3e" />
					<polyline points={DIF} fill="none" stroke="#d4d4d4" strokeWidth="1.200" />
					<polyline points={DEA} fill="none" stroke="#efe432" strokeWidth="1.200" />
				</g>
			</Canvas>
			<Axis $center><AxisLabel $short>0.00</AxisLabel></Axis>
		</Pane>
		<TimeAxis>
			{DATES.map(d => <TimeLabel key={d}>{d}</TimeLabel>)}
			<AxisTools><button>筹</button><button>爆</button></AxisTools>
		</TimeAxis>
		<Legend>
			<svg width="18" height="18" fill="none" stroke="#6a6c75"><circle cx="9" cy="9" r="8" /><path d="M5.500 7.500L9 11l3.500-3.500" /></svg>
			<LegendName><Icon name="bell" />MACD(12,26,9)</LegendName>
			<LegendValue $color="#d8d8d8">DIF:79.46</LegendValue>
			<LegendValue $color="#f2e92e">DEA:20.67</LegendValue>
			<LegendValue $color="#24a37e">MACD:117.58</LegendValue>
		</Legend>
		<Brand>
			<svg width="24" height="20" fill="none" stroke="#fff" strokeWidth="3"><circle cx="7.500" cy="8.500" r="5" /><path d="M13 4v10M23 9c-6-2-8 7-1 8" /><circle cx="17.500" cy="3" r="2.500" fill="#e23c22" stroke="none" /></svg>
			AiCoin
		</Brand>
		<Handle $side="left" aria-label="展开左栏"><svg width="5" height="8" fill="currentColor"><path d="M0 0l5 4-5 4z" /></svg></Handle>
		<Handle $side="right" aria-label="展开右栏"><svg width="5" height="8" fill="currentColor"><path d="M5 0L0 4l5 4z" /></svg></Handle>
		<BottomHandle aria-label="展开底栏"><svg width="9" height="5" fill="currentColor"><path d="M0 5l4.500-5L9 5z" /></svg></BottomHandle>
	</ChartArea>
);

const Footer = () => (
	<>
		<Bar $h={33}>
			<FootCell><Icon name="locate" size={20} weight={1.4} />定位到...</FootCell>
			<FootCell>日期范围<Icon name="down" size={11} /></FootCell>
			<FootNav $w={385}>
				<FootLink href="#a">大额成交</FootLink>
				<FootLink href="#b">主力大单跟踪</FootLink>
				<FootLink href="#c">筹码分布</FootLink>
				<Icon name="right" size={11} />
			</FootNav>
			<FootNav>
				<FootLink href="#d">持仓差值</FootLink>
				<FootLink href="#e">资金背离</FootLink>
				<FootLink href="#f">FR</FootLink>
				<FootLink href="#g" $on>MACD</FootLink>
				<FootLink href="#h">Volume</FootLink>
				<FootLink href="#i">KDJ</FootLink>
				<Icon name="right" size={11} />
				<FootOptions>
					<FootLink href="#j" $bold><Icon name="edit" size={11} />社区指标</FootLink>
					<FootLink href="#k" $small>对数</FootLink>
					<FootLink href="#l" $small>%</FootLink>
					<FootLink href="#m" $small $on $bold>自动</FootLink>
				</FootOptions>
			</FootNav>
		</Bar>
		<LowerTabs>
			<LowerTab href="#n" $on>委托图</LowerTab>
			<LowerTab href="#o">大户数据/预测信息</LowerTab>
			<LowerTab href="#p">网格</LowerTab>
			<LowerTab href="#q">现货</LowerTab>
			<LowerTab href="#r">组合网格</LowerTab>
			<LowerTab href="#s">跟单网格</LowerTab>
			<LowerTab href="#t">分析</LowerTab>
		</LowerTabs>
	</>
);

const Side = () => (
	<RightRail>
		<RailGroup>
			<button aria-label="自选"><Icon name="list" size={20} /></button>
			<button aria-label="资料"><Icon name="doc" size={20} /></button>
			<button aria-label="资金"><Icon name="cash" size={22} /></button>
			<button aria-label="走势"><Icon name="growth" size={20} /></button>
			<button aria-label="大屏"><Icon name="screen" size={21} /></button>
			<button aria-label="ETF">
				<svg width="22" height="20" fill="none" stroke="currentColor" strokeWidth="1.500"><rect x="1" y="4" width="18" height="15" rx="1" /><path d="M7 1h14v12" /><text x="10" y="15" fill="currentColor" stroke="none" fontSize="8" fontWeight="900" textAnchor="middle">ETF</text></svg>
			</button>
			<button aria-label="机器人">
				<svg width="23" height="23" viewBox="0 0 20 20" fill="none" stroke="currentColor" strokeWidth="1.400">{ICONS.robot}<path d="M10 1v3" stroke="#ee4a2c" strokeWidth="2.500" /></svg>
			</button>
		</RailGroup>
		<RailFoot>
			<button aria-label="兑换"><Icon name="swap" size={22} /></button>
			<button aria-label="布局"><Icon name="windows" size={20} /></button>
			<button aria-label="客服"><Icon name="headset" size={20} /></button>
			<button aria-label="助手">
				<svg width="22" height="24"><circle cx="11" cy="10" r="10" fill="#565a70" /><rect x="4" y="4" width="14" height="10" rx="5" fill="#15182c" stroke="#5a4fe0" strokeWidth="2" /><path d="M6 20h10l-2 4H8z" fill="#6b6f80" /></svg>
			</button>
		</RailFoot>
	</RightRail>
);

const App = () => (
	<Page>
		<GlobalStyle />
		<Header />
		<Body>
			<LeftRail>
				{RAIL.map(([kind, label]) => (
					<RailItem key={kind} href={`#${kind}`} $color={kind === 'market' ? BLUE : undefined} $bold={kind === 'market'} $tight={kind === 'more'}>
						<RailArt kind={kind} />
						{label}
						{kind === 'chat' && <Badge>1</Badge>}
					</RailItem>
				))}
				<RailItem href="#vip" $color={GOLD} $tight><RailArt kind="vip" />VIP</RailItem>
			</LeftRail>
			<Main>
				<TickerRow />
				<Toolbar />
				<DrawBar />
				<Chart />
				<Footer />
			</Main>
			<Side />
		</Body>
		<Signature><FaWeibo size={50} />trader交易员五柳</Signature>
	</Page>
);

export default App;
